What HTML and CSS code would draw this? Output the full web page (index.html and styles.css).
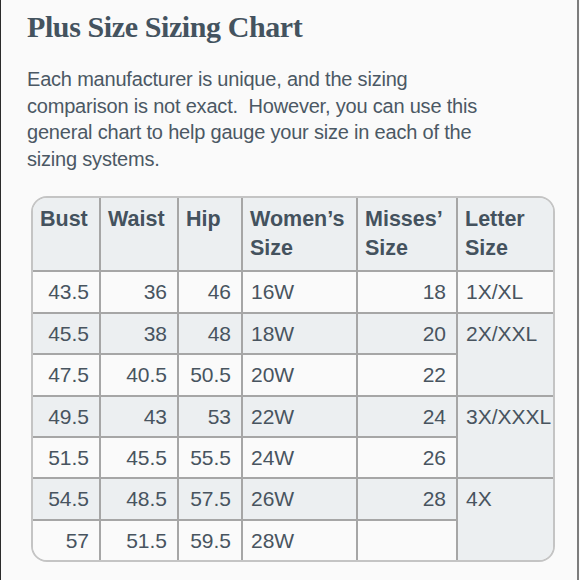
FILE: index.html
```html
<!DOCTYPE html>
<html>
<head>
<meta charset="utf-8">
<link rel="stylesheet" href="styles.css">
</head>
<body>
<div class="frame">
  <h1 class="title">Plus Size Sizing Chart</h1>
  <p class="intro">Each manufacturer is unique, and the sizing<br>comparison is not exact.&nbsp; However, you can use this<br>general chart to help gauge your size in each of the<br>sizing systems.</p>
  <table class="chart">
    <colgroup>
      <col class="c-bust"><col class="c-waist"><col class="c-hip"><col class="c-women"><col class="c-misses"><col class="c-letter">
    </colgroup>
    <thead>
      <tr><th>Bust</th><th>Waist</th><th>Hip</th><th>Women’s<br>Size</th><th>Misses’<br>Size</th><th class="last">Letter<br>Size</th></tr>
    </thead>
    <tbody>
      <tr class="odd"><td class="num">43.5</td><td class="num">36</td><td class="num">46</td><td>16W</td><td class="num">18</td><td class="last">1X/XL</td></tr>
      <tr class="even"><td class="num">45.5</td><td class="num">38</td><td class="num">48</td><td>18W</td><td class="num">20</td><td class="last span" rowspan="2">2X/XXL</td></tr>
      <tr class="odd"><td class="num">47.5</td><td class="num">40.5</td><td class="num">50.5</td><td>20W</td><td class="num">22</td></tr>
      <tr class="even"><td class="num">49.5</td><td class="num">43</td><td class="num">53</td><td>22W</td><td class="num">24</td><td class="last span" rowspan="2">3X/XXXL</td></tr>
      <tr class="odd"><td class="num">51.5</td><td class="num">45.5</td><td class="num">55.5</td><td>24W</td><td class="num">26</td></tr>
      <tr class="even"><td class="num">54.5</td><td class="num">48.5</td><td class="num">57.5</td><td>26W</td><td class="num">28</td><td class="last span end" rowspan="2">4X</td></tr>
      <tr class="odd bottom"><td class="num">57</td><td class="num">51.5</td><td class="num">59.5</td><td>28W</td><td class="num"></td></tr>
    </tbody>
  </table>
</div>
</body>
</html>
```

FILE: styles.css
```css
html, body {
  margin: 0;
  padding: 0;
  background: #fafafa;
}

.frame {
  box-sizing: border-box;
  width: 579px;
  height: 580px;
  border-left: 1px solid #2b2b2b;
  border-right: 2px solid #7c7c7c;
  padding: 12px 0 0 26px;
  color: #45525e;
  font-family: "Liberation Sans", Arial, sans-serif;
  overflow: hidden;
}

.title {
  margin: 0;
  font-family: "Liberation Serif", "Times New Roman", serif;
  font-weight: bold;
  font-size: 30px;
  line-height: 30px;
  letter-spacing: -0.4px;
  color: #44535f;
}

.intro {
  margin: 24px 0 0 0;
  font-size: 20px;
  line-height: 26.6px;
  letter-spacing: -0.2px;
  color: #4b5864;
}

.chart {
  margin: 24px 0 0 4px;
  width: 522px;
  table-layout: fixed;
  border-collapse: separate;
  border-spacing: 0;
  border: 2px solid #c4c4c4;
  border-radius: 16px;
  overflow: hidden;
  font-size: 21px;
  color: #48545f;
}

.c-bust { width: 68px; }
.c-waist { width: 78px; }
.c-hip { width: 64px; }
.c-women { width: 115px; }
.c-misses { width: 100px; }
.c-letter { width: 95px; }

.chart th {
  background: #eceff1;
  text-align: left;
  vertical-align: top;
  font-weight: bold;
  font-size: 21.5px;
  line-height: 29px;
  padding: 7px 4px 7px 7px;
  height: 58px;
  border-right: 2px solid #a6a6a6;
  border-bottom: 2px solid #a6a6a6;
  color: #44525e;
  white-space: nowrap;
}

.chart td {
  vertical-align: top;
  line-height: 24px;
  padding: 8px 8px 7.4px 8px;
  border-right: 2px solid #a6a6a6;
  border-bottom: 2px solid #a6a6a6;
  white-space: nowrap;
}

.chart .last {
  border-right: none;
}

.chart tr.bottom td,
.chart td.end {
  border-bottom: none;
}

.chart td.num {
  text-align: right;
  padding-right: 10px;
}

.odd td {
  background: #fafafa;
}

.even td {
  background: #eceff1;
}
```
